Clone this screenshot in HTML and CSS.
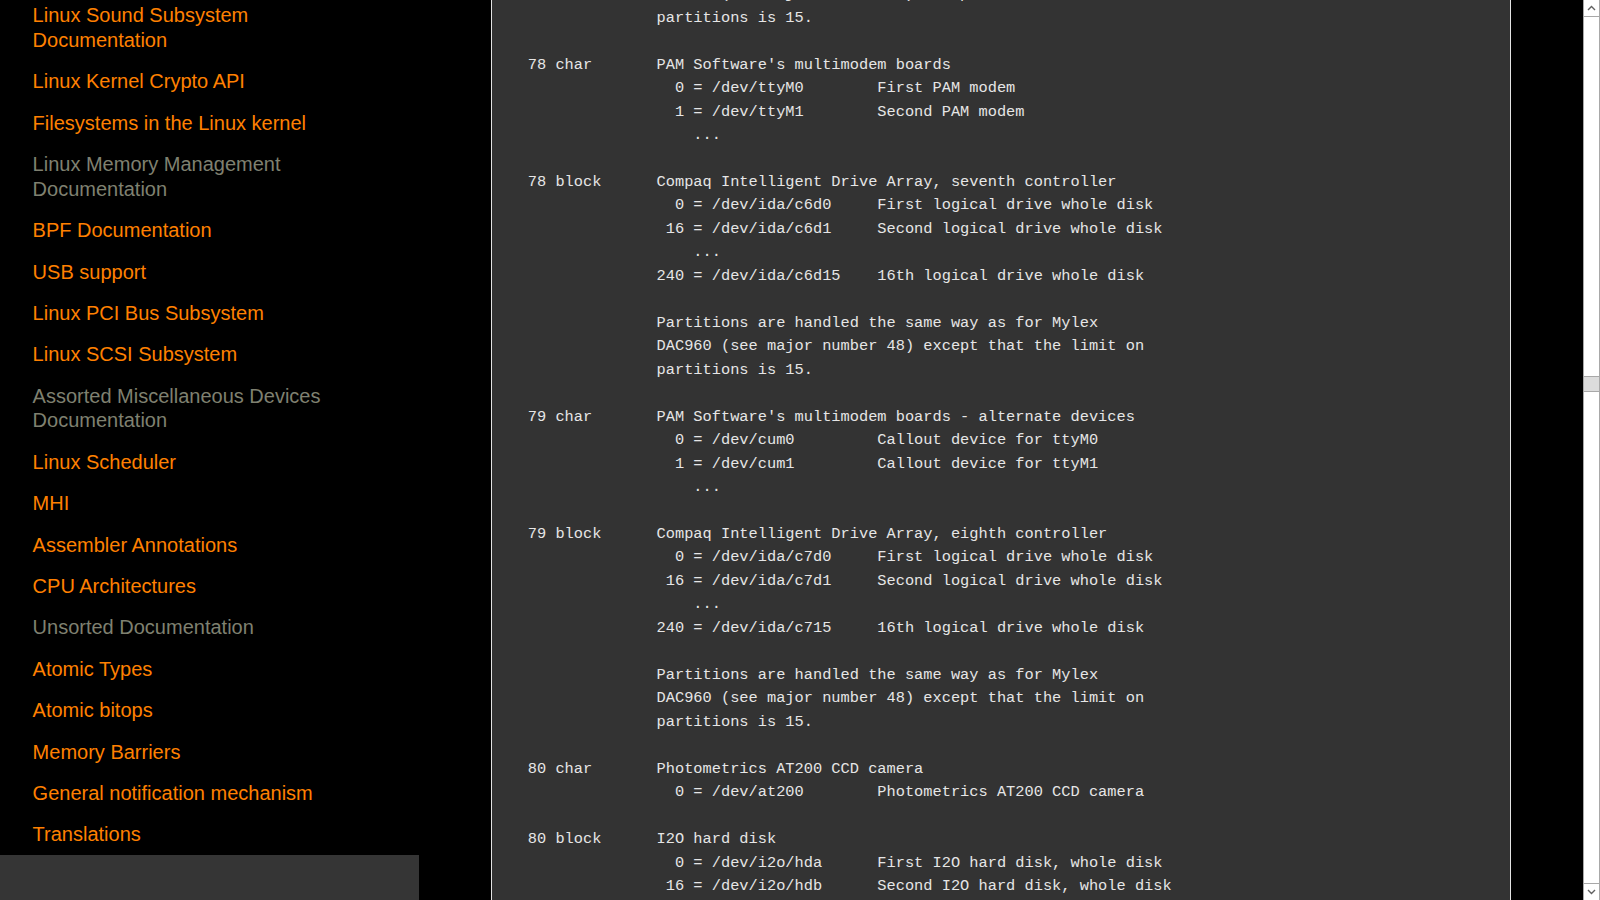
FILE: index.html
```html
<!DOCTYPE html>
<html lang="en">
<head>
<meta charset="utf-8">
<title>Linux allocated devices</title>
<link rel="stylesheet" href="styles.css">
</head>
<body>
<div class="page">
  <nav class="sidebar">
    <ul class="toc">
      <li><a href="#">Linux Sound Subsystem<br>Documentation</a></li>
      <li><a href="#">Linux Kernel Crypto API</a></li>
      <li><a href="#">Filesystems in the Linux kernel</a></li>
      <li><a class="visited" href="#">Linux Memory Management<br>Documentation</a></li>
      <li><a href="#">BPF Documentation</a></li>
      <li><a href="#">USB support</a></li>
      <li><a href="#">Linux PCI Bus Subsystem</a></li>
      <li><a href="#">Linux SCSI Subsystem</a></li>
      <li><a class="visited" href="#">Assorted Miscellaneous Devices<br>Documentation</a></li>
      <li><a href="#">Linux Scheduler</a></li>
      <li><a href="#">MHI</a></li>
      <li><a href="#">Assembler Annotations</a></li>
      <li><a href="#">CPU Architectures</a></li>
      <li><a class="visited" href="#">Unsorted Documentation</a></li>
      <li><a href="#">Atomic Types</a></li>
      <li><a href="#">Atomic bitops</a></li>
      <li><a href="#">Memory Barriers</a></li>
      <li><a href="#">General notification mechanism</a></li>
      <li><a href="#">Translations</a></li>
    </ul>
    <div class="sidebar-foot"></div>
  </nav>
  <main class="content">
<pre class="literal">                DAC960 (see major number 48) except that the limit on
                partitions is 15.

  78 char       PAM Software's multimodem boards
                  0 = /dev/ttyM0        First PAM modem
                  1 = /dev/ttyM1        Second PAM modem
                    ...

  78 block      Compaq Intelligent Drive Array, seventh controller
                  0 = /dev/ida/c6d0     First logical drive whole disk
                 16 = /dev/ida/c6d1     Second logical drive whole disk
                    ...
                240 = /dev/ida/c6d15    16th logical drive whole disk

                Partitions are handled the same way as for Mylex
                DAC960 (see major number 48) except that the limit on
                partitions is 15.

  79 char       PAM Software's multimodem boards - alternate devices
                  0 = /dev/cum0         Callout device for ttyM0
                  1 = /dev/cum1         Callout device for ttyM1
                    ...

  79 block      Compaq Intelligent Drive Array, eighth controller
                  0 = /dev/ida/c7d0     First logical drive whole disk
                 16 = /dev/ida/c7d1     Second logical drive whole disk
                    ...
                240 = /dev/ida/c715     16th logical drive whole disk

                Partitions are handled the same way as for Mylex
                DAC960 (see major number 48) except that the limit on
                partitions is 15.

  80 char       Photometrics AT200 CCD camera
                  0 = /dev/at200        Photometrics AT200 CCD camera

  80 block      I2O hard disk
                  0 = /dev/i2o/hda      First I2O hard disk, whole disk
                 16 = /dev/i2o/hdb      Second I2O hard disk, whole disk
                 32 = /dev/i2o/hdc      Third I2O hard disk, whole disk</pre>
  </main>
  <div class="gutter"></div>
  <div class="scrollbar">
    <div class="sb-btn sb-up">
      <svg width="9" height="6" viewBox="0 0 9 6"><path d="M1 5 L4.5 1.5 L8 5" fill="none" stroke="#606060" stroke-width="1.4"/></svg>
    </div>
    <div class="sb-track">
      <div class="sb-space-top"></div>
      <div class="sb-thumb"></div>
      <div class="sb-space-bottom"></div>
    </div>
    <div class="sb-btn sb-down">
      <svg width="9" height="6" viewBox="0 0 9 6"><path d="M1 1 L4.5 4.5 L8 1" fill="none" stroke="#606060" stroke-width="1.4"/></svg>
    </div>
  </div>
</div>
</body>
</html>
```

FILE: styles.css
```css
html, body {
  margin: 0;
  padding: 0;
  height: 100%;
  overflow: hidden;
  background: #000;
}

.page {
  display: flex;
  flex-direction: row;
  height: 900px;
  width: 1600px;
  overflow: hidden;
}

.sidebar {
  width: 491px;
  flex: 0 0 491px;
  background: #000;
  display: flex;
  flex-direction: column;
  height: 900px;
  overflow: hidden;
}

.toc {
  list-style: none;
  margin: 0;
  padding: 3.2px 0 0 32.6px;
  display: flex;
  flex-direction: column;
  gap: 16.7px;
  font-family: "Liberation Sans", Arial, sans-serif;
  font-size: 20px;
  line-height: 24.7px;
}

.toc a {
  color: #ff8000;
  text-decoration: none;
}

.toc a.visited {
  color: #7f8070;
}

.sidebar-foot {
  margin-top: 8px;
  width: 419px;
  flex: 1 0 45px;
  background: #353535;
}

.content {
  flex: 0 0 1018px;
  width: 1018px;
  background: #333333;
  border-left: 1px solid #e4e4e4;
  border-right: 1px solid #e4e4e4;
  height: 900px;
  overflow: hidden;
}

.literal {
  margin: -16.8px 0 0 0;
  padding: 0 0 0 17.4px;
  font-family: "Liberation Mono", "DejaVu Sans Mono", monospace;
  font-size: 15.33px;
  line-height: 23.47px;
  color: #e6e6e6;
  white-space: pre;
}

.gutter {
  flex: 0 0 72px;
  background: #000;
}

.scrollbar {
  flex: 0 0 15px;
  width: 15px;
  border-left: 1px solid #a8a8a8;
  border-right: 1px solid #a8a8a8;
  background: #fff;
  display: flex;
  flex-direction: column;
  height: 900px;
}

.sb-btn {
  height: 16px;
  flex: 0 0 16px;
  display: flex;
  align-items: center;
  justify-content: center;
  background: #fff;
}

.sb-up {
  border-bottom: 1px solid #a8a8a8;
}

.sb-down {
  border-top: 1px solid #a8a8a8;
}

.sb-track {
  flex: 1;
  display: flex;
  flex-direction: column;
}

.sb-space-top {
  height: 359px;
}

.sb-thumb {
  height: 14px;
  background: #dcdcdc;
  border-top: 1px solid #a8a8a8;
  border-bottom: 1px solid #a8a8a8;
}

.sb-space-bottom {
  flex: 1;
}
```
